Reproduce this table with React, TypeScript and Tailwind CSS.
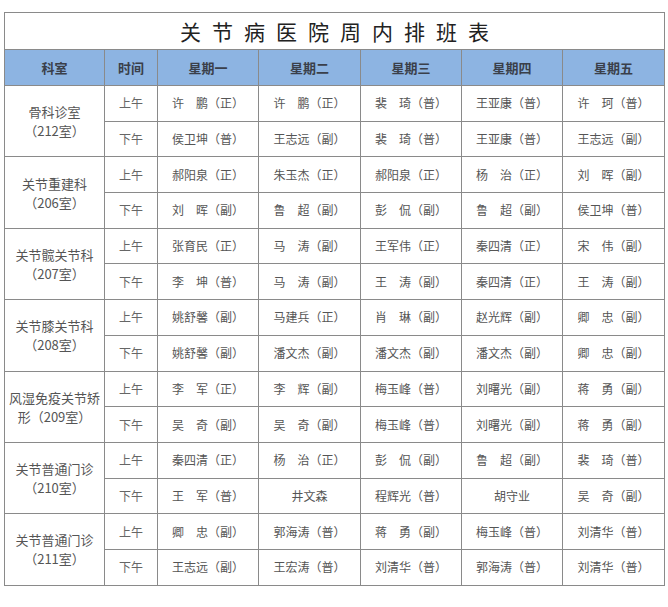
import React from "react";

type Slot = [string, string, string, string, string];
type Dept = { name: string[]; am: Slot; pm: Slot };

const S = "\u3000";

const depts: Dept[] = [
  {
    name: ["骨科诊室", "（212室）"],
    am: [`许${S}鹏（正）`, `许${S}鹏（正）`, `裴${S}琦（普）`, "王亚康（普）", `许${S}珂（普）`],
    pm: ["侯卫坤（普）", "王志远（副）", `裴${S}琦（普）`, "王亚康（普）", "王志远（副）"],
  },
  {
    name: ["关节重建科", "（206室）"],
    am: ["郝阳泉（正）", "朱玉杰（正）", "郝阳泉（正）", `杨${S}治（正）`, `刘${S}晖（副）`],
    pm: [`刘${S}晖（副）`, `鲁${S}超（副）`, `彭${S}侃（副）`, `鲁${S}超（副）`, "侯卫坤（普）"],
  },
  {
    name: ["关节髋关节科", "（207室）"],
    am: ["张育民（正）", `马${S}涛（副）`, "王军伟（正）", "秦四清（正）", `宋${S}伟（副）`],
    pm: [`李${S}坤（普）`, `马${S}涛（副）`, `王${S}涛（副）`, "秦四清（正）", `王${S}涛（副）`],
  },
  {
    name: ["关节膝关节科", "（208室）"],
    am: ["姚舒馨（副）", "马建兵（正）", `肖${S}琳（副）`, "赵光辉（副）", `卿${S}忠（副）`],
    pm: ["姚舒馨（副）", "潘文杰（副）", "潘文杰（副）", "潘文杰（副）", `卿${S}忠（副）`],
  },
  {
    name: ["风湿免疫关节矫", "形（209室）"],
    am: [`李${S}军（正）`, `李${S}辉（副）`, "梅玉峰（普）", "刘曙光（副）", `蒋${S}勇（副）`],
    pm: [`吴${S}奇（副）`, `吴${S}奇（副）`, "梅玉峰（普）", "刘曙光（副）", `蒋${S}勇（副）`],
  },
  {
    name: ["关节普通门诊", "（210室）"],
    am: ["秦四清（正）", `杨${S}治（正）`, `彭${S}侃（副）`, `鲁${S}超（副）`, `裴${S}琦（普）`],
    pm: [`王${S}军（普）`, "井文森", "程辉光（普）", "胡守业", `吴${S}奇（副）`],
  },
  {
    name: ["关节普通门诊", "（211室）"],
    am: [`卿${S}忠（副）`, "郭海涛（普）", `蒋${S}勇（副）`, "梅玉峰（普）", "刘清华（普）"],
    pm: ["王志远（副）", "王宏涛（普）", "刘清华（普）", "郭海涛（普）", "刘清华（普）"],
  },
];

const font = {
  fontFamily: '"Noto Sans CJK SC", "Noto Sans", sans-serif',
};

const cell = "border border-[#8a8a8a] text-center align-middle p-0";

export default function App() {
  return (
    <div className="w-[668px] h-[607px] bg-white pt-[12px] pl-[4px]" style={font}>
      <table className="border-collapse table-fixed w-[660px]">
        <colgroup>
          <col className="w-[100px]" />
          <col className="w-[53px]" />
          <col className="w-[101px]" />
          <col className="w-[102px]" />
          <col className="w-[101px]" />
          <col className="w-[101px]" />
          <col className="w-[102px]" />
        </colgroup>
        <tbody>
          <tr className="h-[37px]">
            <td colSpan={7} className={`${cell} text-[21px] text-[#222] tracking-[11px] pl-[11px] leading-none`}>
              关节病医院周内排班表
            </td>
          </tr>
          <tr className="h-[36px] bg-[#8db4e2]">
            {["科室", "时间", "星期一", "星期二", "星期三", "星期四", "星期五"].map((h) => (
              <td key={h} className={`${cell} text-[13px] font-bold text-[#3a3f4a]`}>
                {h}
              </td>
            ))}
          </tr>
          {depts.map((d, i) => (
            <React.Fragment key={i}>
              <tr className="h-[35.7px]">
                <td rowSpan={2} className={`${cell} text-[13px] leading-[19px] text-[#555] px-[1px]`}>
                  <div>{d.name[0]}</div>
                  <div>{d.name[1]}</div>
                </td>
                <td className={`${cell} text-[12px] text-[#666]`}>上午</td>
                {d.am.map((v, j) => (
                  <td key={j} className={`${cell} text-[12px] text-[#555]`}>
                    {v}
                  </td>
                ))}
              </tr>
              <tr className="h-[35.7px]">
                <td className={`${cell} text-[12px] text-[#666]`}>下午</td>
                {d.pm.map((v, j) => (
                  <td key={j} className={`${cell} text-[12px] text-[#555]`}>
                    {v}
                  </td>
                ))}
              </tr>
            </React.Fragment>
          ))}
        </tbody>
      </table>
    </div>
  );
}
